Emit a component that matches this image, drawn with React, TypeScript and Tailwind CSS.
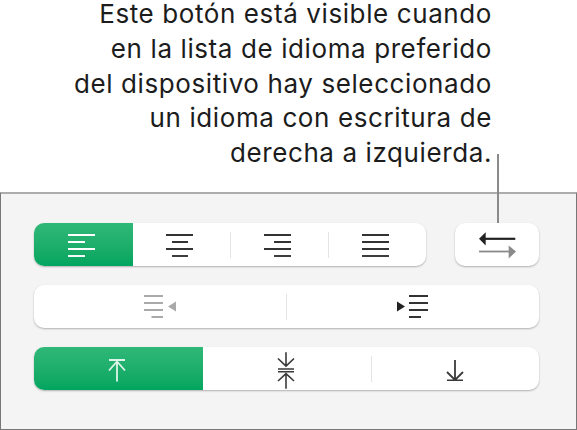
import React from "react";

function Bars({ x, color }: { x: number[][]; color: string }) {
  return (
    <svg width="28" height="24" viewBox="0 0 28 24" className="block">
      {x.map((l, i) => (
        <line key={i} x1={l[0]} x2={l[1]} y1={2 + i * 7} y2={2 + i * 7} stroke={color} strokeWidth={1.9} />
      ))}
    </svg>
  );
}

function Sep() {
  return <div className="w-px h-[26px] bg-[#e4e4e4]" />;
}

const card = "bg-white rounded-[10px] shadow-[0_1px_2px_rgba(0,0,0,0.28)] h-[43px]";
const green = "bg-gradient-to-b from-[#2fb878] to-[#00a55f]";

const lines = [
  "Este botón está visible cuando",
  "en la lista de idioma preferido",
  "del dispositivo hay seleccionado",
  "un idioma con escritura de",
  "derecha a izquierda.",
];

export default function App() {
  return (
    <div className="w-[577px] h-[430px] bg-white overflow-hidden flex flex-col font-['Inter','Liberation_Sans',sans-serif]">
      <div className="h-[192px] shrink-0 pr-[85px] flex flex-col items-end gap-[6.8px] text-[26px] leading-[28px] tracking-[0.6px] text-[#1c1c1c]">
        {lines.map((l) => (
          <p key={l} className="whitespace-nowrap">{l}</p>
        ))}
      </div>
      <div className="relative flex-1 bg-[#f4f4f4] border-t-[2px] border-t-[#acacac] border-x border-x-[#777] border-b border-b-[#777] pt-[29px] pl-[33px] pr-[37px]">
        <div className="absolute left-[496px] top-[-40px] w-[2px] h-[69px] bg-[#8a8a8a] z-10" />
        <div className="flex gap-[29px]">
          <div className={`${card} flex-1 flex items-center overflow-hidden`}>
            <div className={`${green} w-[99px] h-full flex items-center justify-center pr-[4px]`}>
              <Bars color="#fff" x={[[0, 27], [0, 17], [0, 27], [0, 17]]} />
            </div>
            <div className="flex-1 flex items-center justify-center pr-[3px]"><Bars color="#333" x={[[0, 27], [6, 22], [0, 27], [6, 22]]} /></div>
            <Sep />
            <div className="flex-1 flex items-center justify-center pr-[3px]"><Bars color="#333" x={[[0, 27], [10, 27], [0, 27], [10, 27]]} /></div>
            <Sep />
            <div className="flex-1 flex items-center justify-center pr-[3px]"><Bars color="#333" x={[[0, 27], [0, 27], [0, 27], [0, 27]]} /></div>
          </div>
          <div className={`${card} w-[84px] flex items-center justify-center`}>
            <svg width="40" height="28" viewBox="0 0 40 28">
              <path d="M8 7.8H38.3" stroke="#222" strokeWidth="2.2" />
              <path d="M2 7.8L8.7 1.2V14.5Z" fill="#222" />
              <path d="M2 20.5H32" stroke="#8a8a8a" strokeWidth="1.8" />
              <path d="M39 20.5L31.7 14.5V27.5Z" fill="#8a8a8a" />
            </svg>
          </div>
        </div>
        <div className={`${card} mt-[19px] flex items-center`}>
          <div className="flex-1 flex items-center justify-center">
            <svg width="34" height="26" viewBox="0 0 34 26">
              <g stroke="#a9a9a9" strokeWidth="1.9">
                <path d="M1 2H20M1 9H20M1 16H20M8.5 23H20" />
              </g>
              <path d="M25 12.5L33 7.5V17.5Z" fill="#a9a9a9" />
            </svg>
          </div>
          <Sep />
          <div className="flex-1 flex items-center justify-center">
            <svg width="34" height="26" viewBox="0 0 34 26">
              <g stroke="#333" strokeWidth="1.9">
                <path d="M13 2H32M13 9H32M13 16H32M13 23H25" />
              </g>
              <path d="M9 12.5L1 7.5V17.5Z" fill="#222" />
            </svg>
          </div>
        </div>
        <div className={`${card} mt-[19px] flex items-center overflow-hidden`}>
          <div className={`${green} w-[169px] h-full flex items-center justify-center pr-[3px]`}>
            <svg width="20" height="26" viewBox="0 0 20 26">
              <path d="M2 4H18M10 25.5V5.5M2 14.5L10 5.5L18 14.5" fill="none" stroke="#dff5ea" strokeWidth="1.8" />
            </svg>
          </div>
          <div className="flex-1 flex items-center justify-center">
            <svg width="20" height="40" viewBox="0 0 20 40" className="-ml-[2px]">
              <path d="M10 3.2V17M2 9.5L10 17.2L18 9.5M2 20H18M2 22.7H18M10 39.8V25M2 32L10 24.7L18 32" fill="none" stroke="#3a3a3a" strokeWidth="1.6" />
            </svg>
          </div>
          <Sep />
          <div className="flex-1 flex items-center justify-center">
            <svg width="20" height="24" viewBox="0 0 20 24">
              <path d="M10 3V23M2 15L10 23L18 15M2 23.5H18" fill="none" stroke="#3a3a3a" strokeWidth="1.8" />
            </svg>
          </div>
        </div>
      </div>
    </div>
  );
}
